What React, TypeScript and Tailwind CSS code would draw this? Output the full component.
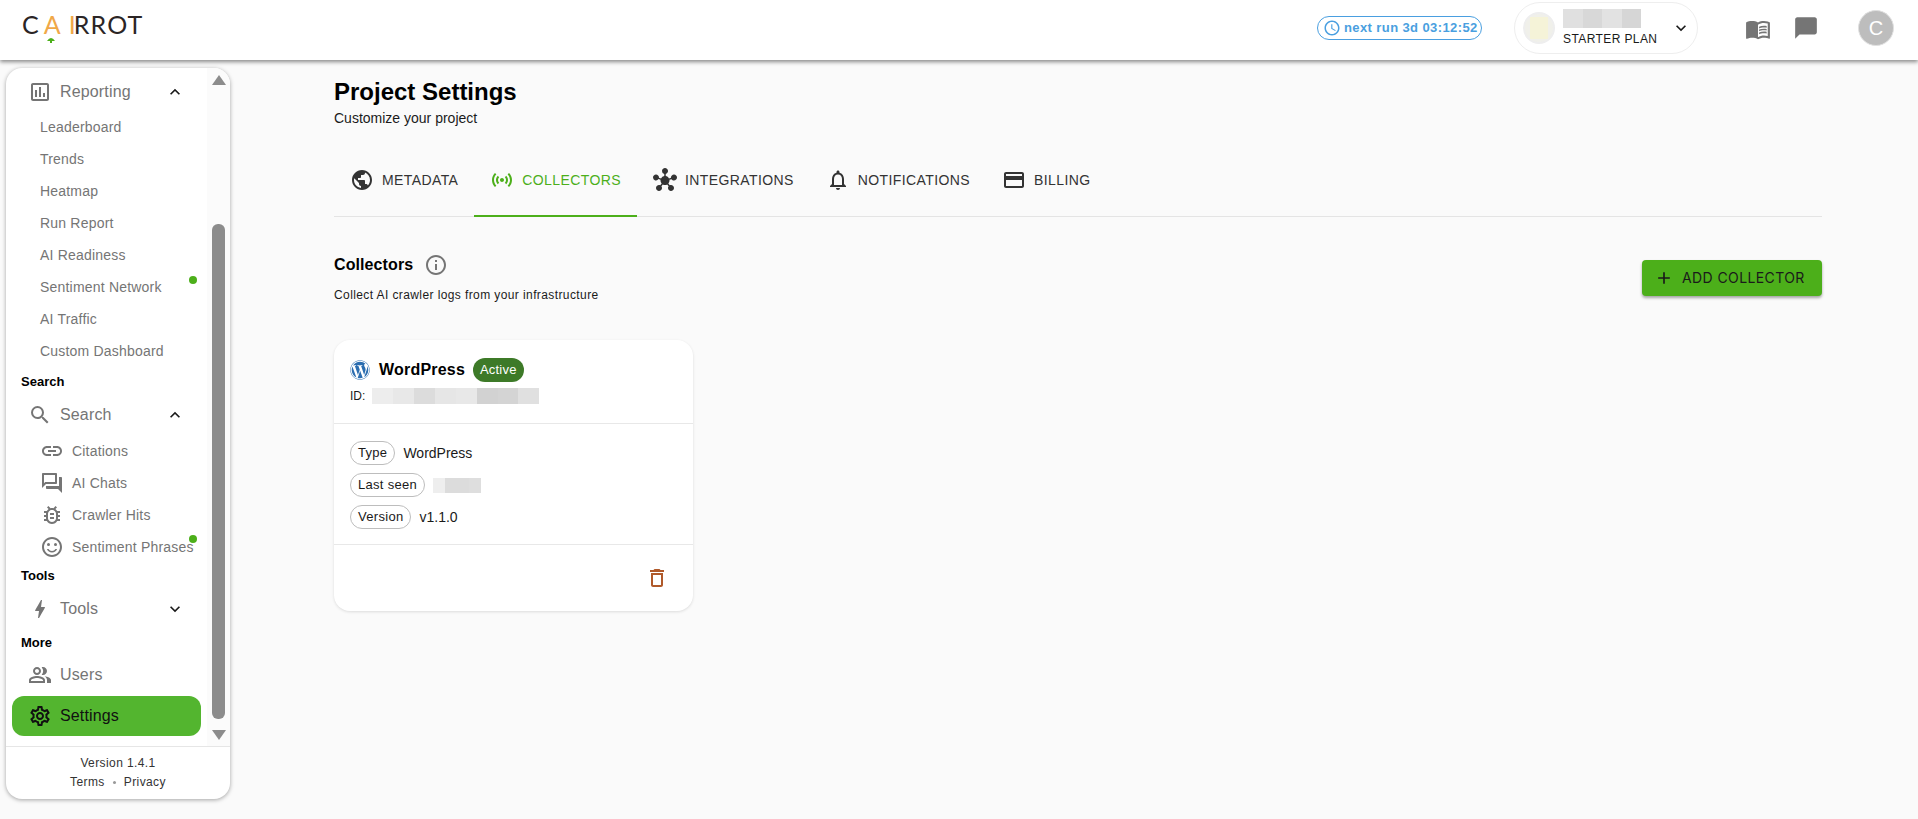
import {
  MdAccessTime,
  MdAdd,
  MdBolt,
  MdChatBubble,
  MdCreditCard,
  MdDeleteOutline,
  MdExpandLess,
  MdExpandMore,
  MdHub,
  MdInfoOutline,
  MdLink,
  MdMenuBook,
  MdNotificationsNone,
  MdOutlineAssessment,
  MdOutlineBugReport,
  MdOutlineForum,
  MdOutlinePeopleAlt,
  MdOutlineSentimentSatisfied,
  MdOutlineSettings,
  MdPublic,
  MdSearch,
  MdSensors,
} from "react-icons/md";
import { FaWordpress } from "react-icons/fa";
import type { ReactNode } from "react";

const reportItems = [
  { label: "Leaderboard" },
  { label: "Trends" },
  { label: "Heatmap" },
  { label: "Run Report" },
  { label: "AI Readiness" },
  { label: "Sentiment Network", dot: true },
  { label: "AI Traffic" },
  { label: "Custom Dashboard" },
];

const searchItems = [
  { label: "Citations", icon: <MdLink size={24} /> },
  { label: "AI Chats", icon: <MdOutlineForum size={24} /> },
  { label: "Crawler Hits", icon: <MdOutlineBugReport size={24} /> },
  { label: "Sentiment Phrases", icon: <MdOutlineSentimentSatisfied size={24} />, dot: true },
];

const tabs = [
  { label: "METADATA", icon: <MdPublic size={24} /> },
  { label: "COLLECTORS", icon: <MdSensors size={24} />, active: true },
  { label: "INTEGRATIONS", icon: <MdHub size={24} /> },
  { label: "NOTIFICATIONS", icon: <MdNotificationsNone size={24} /> },
  { label: "BILLING", icon: <MdCreditCard size={24} /> },
];

const Blur = ({ shades, className }: { shades: string[]; className: string }) => (
  <div className={`flex ${className}`}>
    {shades.map((s, i) => (
      <div key={i} className="flex-1 h-full" style={{ backgroundColor: s }} />
    ))}
  </div>
);

const NavRow = ({ icon, label, open }: { icon: ReactNode; label: string; open?: boolean }) => (
  <div className="flex items-center h-10 pl-[22px] text-[#757575]">
    <span className="w-6 flex justify-center">{icon}</span>
    <span className="ml-[8px] text-base tracking-[0.15px]">{label}</span>
    {open !== undefined && (
      <span className="ml-auto mr-[22px] text-[#1a1a1a]">
        {open ? <MdExpandLess size={20} /> : <MdExpandMore size={20} />}
      </span>
    )}
  </div>
);

const Label = ({ children, className }: { children: string; className: string }) => (
  <div className={`flex items-center pl-[15px] text-[13px] font-bold text-black ${className}`}>{children}</div>
);

const Chip = ({ label, children }: { label: string; children: ReactNode }) => (
  <div className="flex items-center gap-[8px] h-6 text-[13px] text-[#1a1a1a]">
    <span className="h-6 px-[7px] flex items-center rounded-full border border-[#bdbdbd] tracking-[0.3px]">{label}</span>
    {children}
  </div>
);

export default function App() {
  return (
    <div className="w-full h-[819px] overflow-hidden flex flex-col bg-[#fafafa] font-['Liberation_Sans',Arial,sans-serif]">
      <header className="relative z-10 h-[60px] shrink-0 bg-white shadow-[0_2px_4px_rgba(0,0,0,0.45)] flex items-start">
        <div className="ml-[22px] mt-[8px] relative font-['Lato',sans-serif] text-[25px] font-normal leading-[32px] text-[#2b2525] flex">
          <span>C</span>
          <span className="ml-[5px] text-[#f0a848]">A</span>
          <span className="ml-[8px] text-[#f0a848]">I</span>
          <span className="-ml-[2px] tracking-[1.2px]">RROT</span>
          <svg className="absolute left-[25px] top-[29px]" width="8" height="6" viewBox="0 0 8 6">
            <path d="M0 4 Q4 -2 8 4 L5 4 L5 6 L3 6 L3 4 Z" fill="#4caf1a" />
          </svg>
        </div>

        <div className="ml-auto mt-[16px] w-[165px] h-6 flex items-center gap-[3px] rounded-full border border-[#4a9fe0] pl-[5px] text-[#4a9fe0] text-[13px] font-bold tracking-[0.4px] whitespace-nowrap">
          <MdAccessTime size={18} />
          <span>next run 3d 03:12:52</span>
        </div>

        <div className="ml-[32px] mt-[2px] w-[184px] h-[52px] flex items-center rounded-full border border-[#eeeeee] pl-[8px]">
          <div className="w-8 h-8 rounded-full bg-[#f0f0ea] border-2 border-[#eeeeee] flex items-center justify-center">
            <div className="w-[18px] h-[22px] bg-[#f5f3d8]" />
          </div>
          <div className="ml-[8px] w-[96px] flex flex-col">
            <Blur shades={["#e0e0e0", "#d8d8d8", "#e2e2e2", "#d6d6d6"]} className="w-[78px] h-[19px]" />
            <span className="mt-[3px] text-xs leading-[16px] text-[#1a1a1a] whitespace-nowrap tracking-[0.4px]">STARTER PLAN</span>
          </div>
          <span className="ml-[12px] text-[#1a1a1a]">
            <MdExpandMore size={20} />
          </span>
        </div>

        <span className="ml-[47px] mt-[16px] text-[#757575]">
          <MdMenuBook size={26} />
        </span>
        <span className="ml-[22px] mt-[15px] text-[#757575]">
          <MdChatBubble size={26} />
        </span>
        <div className="ml-[39px] mr-[24px] mt-[10px] w-9 h-9 rounded-full bg-[#bdbdbd] border border-[#e0e0e0] flex items-center justify-center text-white text-xl">
          C
        </div>
      </header>

      <div className="flex flex-1 min-h-0">
        <aside className="ml-[6px] mt-2 w-[224px] h-[731px] shrink-0 flex flex-col rounded-2xl bg-white shadow-[0_1px_4px_rgba(0,0,0,0.35)] overflow-hidden">
          <div className="flex flex-1 min-h-0">
            <div className="flex-1 min-w-0 pt-1">
              <NavRow icon={<MdOutlineAssessment size={24} />} label="Reporting" open />
              <div className="-mt-px">
                {reportItems.map((item) => (
                  <div key={item.label} className="relative h-8 flex items-center pl-[34px] text-[14px] tracking-[0.2px] text-[#757575] whitespace-nowrap">
                    {item.label}
                    {item.dot && <span className="absolute left-[183px] top-[5px] w-2 h-2 rounded-full bg-[#4caf1a]" />}
                  </div>
                ))}
              </div>
              <Label className="h-[27px] mt-px">Search</Label>
              <NavRow icon={<MdSearch size={24} />} label="Search" open />
              {searchItems.map((item) => (
                <div key={item.label} className="relative h-8 flex items-center pl-[34px] text-[14px] tracking-[0.2px] text-[#757575] whitespace-nowrap">
                  <span className="w-6 flex justify-center">{item.icon}</span>
                  <span className="ml-[8px]">{item.label}</span>
                  {item.dot && <span className="absolute left-[183px] top-[4px] w-2 h-2 rounded-full bg-[#4caf1a]" />}
                </div>
              ))}
              <Label className="h-[26px]">Tools</Label>
              <NavRow icon={<MdBolt size={24} />} label="Tools" open={false} />
              <Label className="h-[26px] pt-px">More</Label>
              <NavRow icon={<MdOutlinePeopleAlt size={24} />} label="Users" />
              <div className="ml-[6px] mr-[6px] mt-px h-10 flex items-center pl-[16px] rounded-xl bg-[#53b52f] text-[#111]">
                <span className="w-6 flex justify-center">
                  <MdOutlineSettings size={24} />
                </span>
                <span className="ml-[8px] text-base tracking-[0.15px]">Settings</span>
              </div>
            </div>
            <div className="w-[23px] shrink-0 bg-[#fbfbfb] flex flex-col items-center">
              <div className="mt-[7px] w-0 h-0 border-x-[7px] border-x-transparent border-b-[10px] border-b-[#8c8c8c]" />
              <div className="mt-[139px] w-[13px] h-[495px] bg-[#8c8c8c] rounded-md" />
              <div className="mt-[11px] w-0 h-0 border-x-[7px] border-x-transparent border-t-[10px] border-t-[#8c8c8c]" />
            </div>
          </div>
          <div className="h-[53px] shrink-0 border-t border-[#e6e6e6] flex flex-col items-center justify-center text-xs leading-[19px] text-[#333] tracking-[0.4px]">
            <span>Version 1.4.1</span>
            <span className="flex items-center gap-[8px]">
              Terms <span className="w-[3px] h-[3px] rounded-full bg-[#999]" /> Privacy
            </span>
          </div>
        </aside>

        <main className="flex-1 min-w-0 pl-[104px] pr-[96px] pt-4">
          <h1 className="text-2xl leading-8 font-bold text-black">Project Settings</h1>
          <p className="mt-px text-sm leading-[18px] text-[#1a1a1a]">Customize your project</p>

          <div className="mt-[18px] h-[72px] flex border-b border-[#e4e4e4]">
            {tabs.map((tab) => (
              <div
                key={tab.label}
                className={`h-[72px] px-[16px] flex items-center gap-[8px] text-sm tracking-[0.4px] border-b-2 ${
                  tab.active ? "text-[#4caf1a] border-[#4caf1a]" : "text-[#333] border-transparent"
                }`}
              >
                {tab.icon}
                <span>{tab.label}</span>
              </div>
            ))}
          </div>

          <div className="mt-[36px] flex items-start justify-between">
            <div>
              <div className="h-6 flex items-center gap-[11px] text-base font-bold text-black tracking-[0.1px]">
                Collectors
                <span className="text-[#757575]">
                  <MdInfoOutline size={24} />
                </span>
              </div>
              <p className="mt-[9px] text-xs leading-[18px] text-[#1a1a1a] tracking-[0.4px]">Collect AI crawler logs from your infrastructure</p>
            </div>
            <button className="mt-[7px] h-9 w-[180px] flex items-center pl-[12px] gap-[8px] rounded bg-[#4caf1a] font-['Inter',sans-serif] text-sm tracking-[0.4px] text-[#1a1a1a] shadow-[0_2px_3px_rgba(0,0,0,0.35)]">
              <MdAdd size={20} />
              ADD COLLECTOR
            </button>
          </div>

          <div className="mt-[36px] w-[359px] h-[271px] flex flex-col rounded-2xl bg-white shadow-[0_1px_3px_rgba(0,0,0,0.12)]">
            <div className="h-[84px] shrink-0 border-b border-[#e8e8e8] pl-[16px] pt-[18px]">
              <div className="flex items-center h-6">
                <FaWordpress size={20} className="text-[#2a6db0]" />
                <span className="ml-[9px] text-base font-bold text-black tracking-[0.2px]">WordPress</span>
                <span className="ml-[8px] h-6 px-[7px] flex items-center rounded-full bg-[#3d7a28] text-white text-[13px] tracking-[0.2px]">Active</span>
              </div>
              <div className="mt-[6px] flex items-center text-xs text-[#1a1a1a]">
                <span>ID:</span>
                <Blur shades={["#ededed", "#e8e8e8", "#dcdcdc", "#e6e6e6", "#e8e8e8", "#d2d2d2", "#d4d4d4", "#e0e0e0"]} className="ml-[7px] w-[167px] h-[16px]" />
              </div>
            </div>
            <div className="h-[121px] shrink-0 border-b border-[#e8e8e8] pl-[16px] pt-[17px] flex flex-col gap-[8px]">
              <Chip label="Type">
                <span className="text-[14px]">WordPress</span>
              </Chip>
              <Chip label="Last seen">
                <Blur shades={["#eeeeee", "#dcdcdc", "#dcdcdc", "#dedede"]} className="w-[48px] h-[15px]" />
              </Chip>
              <Chip label="Version">
                <span className="text-[14px]">v1.1.0</span>
              </Chip>
            </div>
            <div className="flex-1 flex items-start justify-end pr-[24px] pt-[21px] text-[#b0592a]">
              <MdDeleteOutline size={24} />
            </div>
          </div>
        </main>
      </div>
    </div>
  );
}
